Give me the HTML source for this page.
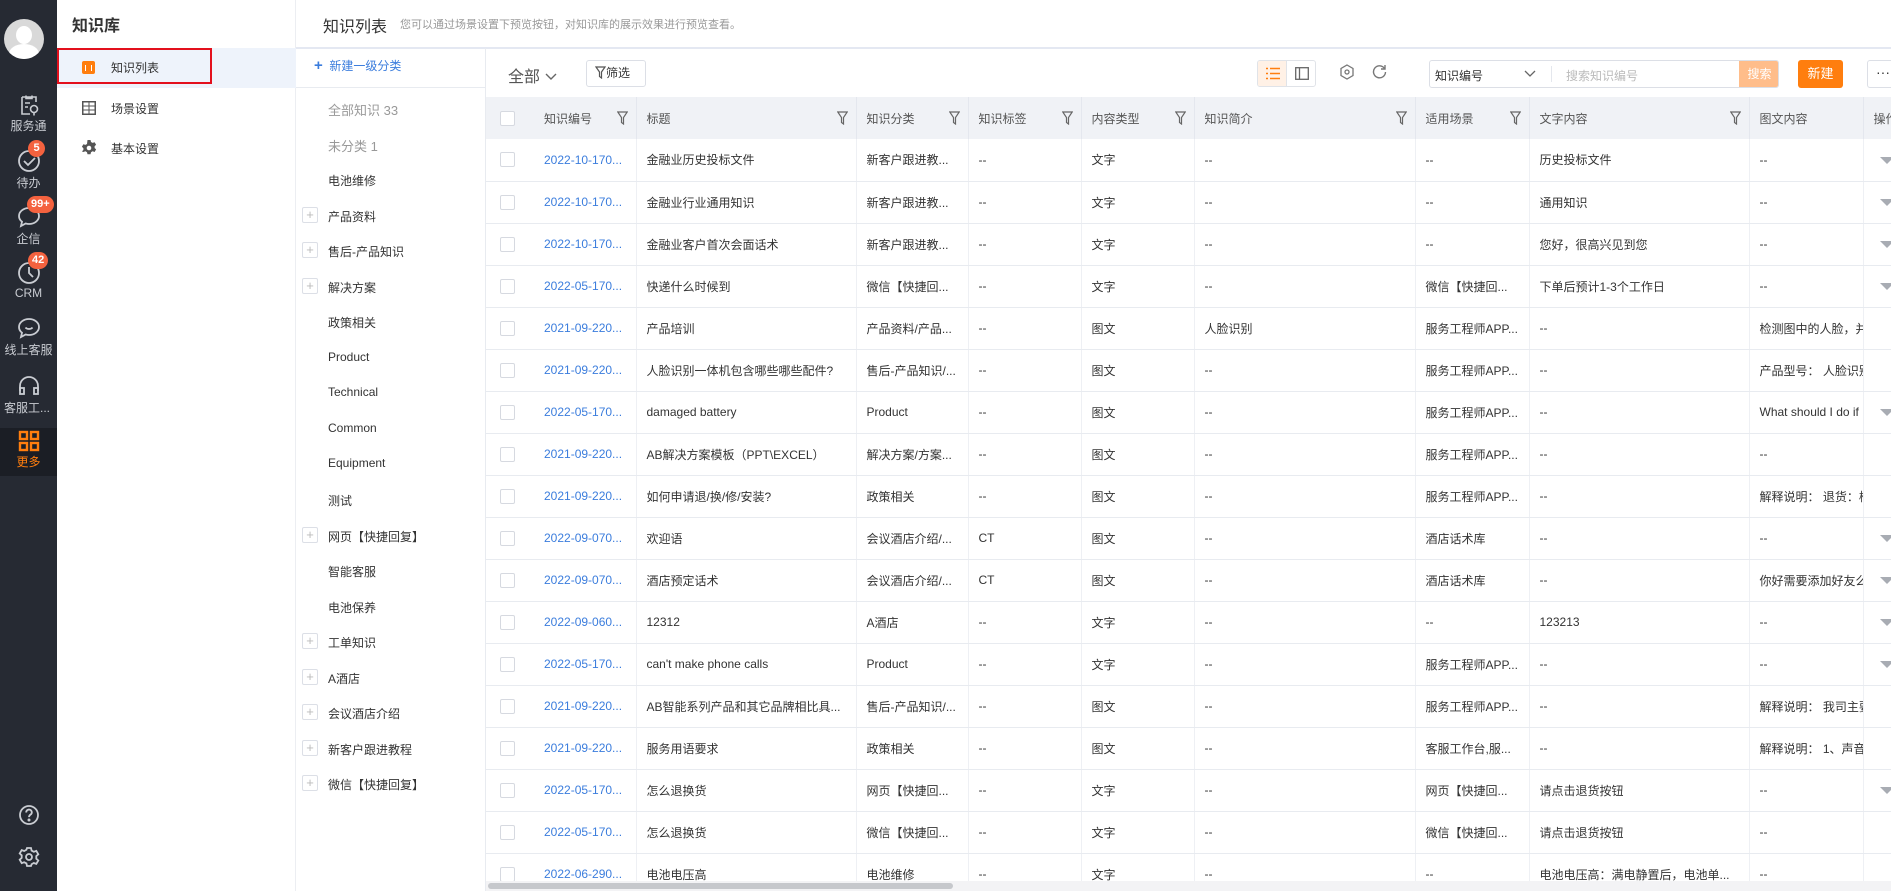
<!DOCTYPE html>
<html><head><meta charset="utf-8">
<style>
*{box-sizing:border-box;margin:0;padding:0}
html,body{width:1891px;height:891px;overflow:hidden;background:#fff;font-family:"Liberation Sans","Noto Sans CJK SC",sans-serif;color:#333;font-size:12px}
.abs{position:absolute}
#side{left:0;top:0;width:57px;height:891px;background:#262a33}
.nav{position:absolute;left:0;width:57px;text-align:center;color:#c9ccd2;font-size:12px}
.nav svg{display:block;margin:0 auto}
.badge{position:absolute;background:#f4623f;color:#fff;font-size:11px;font-weight:bold;border-radius:9px;height:17px;line-height:17px;padding:0 4px;min-width:17px;text-align:center}
#menu{left:57px;top:0;width:239px;height:891px;background:#fff;border-right:1px solid #eceef2}
#cat{left:296px;top:48px;width:190px;height:843px;border-right:1px solid #e8ebf0}
.catitem{position:absolute;left:32px;font-size:12px;color:#333}
.plus{position:absolute;left:-26px;top:-1px;width:16px;height:16px;border:1px solid #dcdfe6;border-radius:2px;color:#bbb;font-size:13px;line-height:13px;text-align:center}
table{border-collapse:collapse;table-layout:fixed}
td,th{height:42px;border-bottom:1px solid #e8ebf0;padding:0 10px;white-space:nowrap;overflow:hidden;text-align:left;font-weight:normal;font-size:12px}
th{background:#f0f2f6;color:#555;border-right:1px solid #e4e7ee;position:relative;border-bottom:none}
td{border-right:1px solid #eef0f4}
td:first-child,th:first-child{border-right:none}
.cb{width:15px;height:15px;border:1px solid #d6d9e0;border-radius:2px;background:#fff;margin-left:4px}
.lk{color:#3b7ddd}
.flt{position:absolute;right:8px;top:14px}
.tri{display:inline-block;width:0;height:0;border-left:7px solid transparent;border-right:7px solid transparent;border-top:7px solid #a8acb3;margin-top:4px}
</style></head><body>

<div id="side" class="abs">
  <div class="abs" style="left:4px;top:19px;width:40px;height:40px;border-radius:50%;background:#d9d9d9;overflow:hidden">
    <div style="position:absolute;left:12px;top:7px;width:16px;height:18px;border-radius:50%;background:#fff"></div>
    <div style="position:absolute;left:5px;top:25px;width:30px;height:20px;border-radius:50% 50% 0 0;background:#fff"></div>
  </div>
  <div class="nav" style="top:94px"><svg width="22" height="22" viewBox="0 0 22 22" fill="none" stroke="#c9ccd2" stroke-width="1.6"><path d="M4 3h14v5M4 3v17h8M8 1.5v3h6v-3M7 9h5M7 13h3"/><circle cx="16" cy="15" r="3.5"/><path d="M16 18.5v3"/></svg><div style="margin-top:1px">服务通</div></div>
  <div class="nav" style="top:149px"><svg width="24" height="24" viewBox="0 0 24 24" fill="none" stroke="#c9ccd2" stroke-width="1.8"><circle cx="12" cy="12" r="10"/><path d="M7 12l4 4 7-7"/></svg><div style="margin-top:1px">待办</div></div>
  <div class="badge" style="left:28px;top:140px">5</div>
  <div class="nav" style="top:205px"><svg width="24" height="24" viewBox="0 0 24 24" fill="none" stroke="#c9ccd2" stroke-width="1.8"><path d="M12 3c5.5 0 10 3.6 10 8s-4.5 8-10 8c-1.2 0-2.3-.2-3.3-.5L4 21l1-4.3C3 15.2 2 13.2 2 11c0-4.4 4.5-8 10-8z"/></svg><div style="margin-top:1px">企信</div></div>
  <div class="badge" style="left:27px;top:196px">99+</div>
  <div class="nav" style="top:261px"><svg width="24" height="24" viewBox="0 0 24 24" fill="none" stroke="#c9ccd2" stroke-width="1.8"><circle cx="12" cy="12" r="10"/><path d="M12 6v6l4 4"/></svg><div style="margin-top:1px">CRM</div></div>
  <div class="badge" style="left:28px;top:252px">42</div>
  <div class="nav" style="top:316px"><svg width="24" height="24" viewBox="0 0 24 24" fill="none" stroke="#c9ccd2" stroke-width="1.8"><path d="M12 3c5.5 0 10 3.6 10 8s-4.5 8-10 8c-1.2 0-2.3-.2-3.3-.5L4 21l1-4.3C3 15.2 2 13.2 2 11c0-4.4 4.5-8 10-8z"/><path d="M8.5 11.5c1.5 2 5.5 2 7 0"/></svg><div style="margin-top:1px">线上客服</div></div>
  <div class="nav" style="top:374px;white-space:nowrap;overflow:hidden"><svg width="24" height="24" viewBox="0 0 24 24" fill="none" stroke="#c9ccd2" stroke-width="1.8"><path d="M3 17v-5a9 9 0 0118 0v5"/><rect x="3" y="14" width="4" height="6"/><rect x="17" y="14" width="4" height="6"/></svg><div style="margin-top:1px;margin-left:-3px">客服工...</div></div>
  <div class="abs" style="left:0;top:428px;width:57px;height:48px;background:#1b1e25"></div>
  <div class="nav" style="top:430px;color:#ff7e0e"><svg width="22" height="22" viewBox="0 0 22 22" fill="none" stroke="#ff7e0e" stroke-width="2.4"><rect x="2" y="2" width="7" height="7"/><rect x="13" y="2" width="7" height="7"/><rect x="2" y="13" width="7" height="7"/><rect x="13" y="13" width="7" height="7"/></svg><div style="margin-top:1px">更多</div></div>
  <div class="nav" style="top:804px"><svg width="22" height="22" viewBox="0 0 22 22" fill="none" stroke="#c9ccd2" stroke-width="1.8"><circle cx="11" cy="11" r="9"/><path d="M8.2 8.5a2.8 2.8 0 115 1.6c-1.2.9-2.200 1.4-2.2 3"/><circle cx="11" cy="16" r=".6" fill="#c9ccd2"/></svg></div>
  <div class="nav" style="top:846px"><svg width="22" height="22" viewBox="0 0 22 22" fill="none" stroke="#c9ccd2" stroke-width="1.8"><path d="M9 2h4l.6 2.6 2.2 1.2 2.5-.9 2 3.4-2 1.8v2.6l2 1.8-2 3.4-2.5-.9-2.2 1.2L13 20H9l-.6-2.6-2.2-1.2-2.5.9-2-3.4 2-1.8V9.3l-2-1.8 2-3.4 2.5.9 2.2-1.2z"/><circle cx="11" cy="11" r="3"/></svg></div>
</div>

<div id="menu" class="abs">
  <div class="abs" style="left:15px;top:12px;font-size:16px;font-weight:bold;color:#333">知识库</div>
  <div class="abs" style="left:0;top:48px;width:239px;height:40px;background:#eef3fb"></div>
  <div class="abs" style="left:0;top:48px;width:155px;height:36px;border:2px solid #e3101d"></div>
  <div class="abs" style="left:25px;top:61px;width:13px;height:13px;background:#ff7e0e;border-radius:2px"><div style="position:absolute;left:3px;top:4px;width:7px;height:6px;border-left:1.5px solid #fff;border-right:1.5px solid #fff"></div></div>
  <div class="abs" style="left:54px;top:59px">知识列表</div>
  <div class="abs" style="left:25px;top:101px"><svg width="14" height="14" viewBox="0 0 14 14" fill="#555"><path d="M0 0h14v14H0z M1.5 1.5v3h5v-3z M7.5 1.5v3h5v-3z M1.5 5.5v3h5v-3z M7.5 5.5v3h5v-3z M1.5 9.5v3h5v-3z M7.5 9.5v3h5v-3z" fill-rule="evenodd"/></svg></div>
  <div class="abs" style="left:54px;top:100px">场景设置</div>
  <div class="abs" style="left:24px;top:140px"><svg width="16" height="16" viewBox="0 0 16 16"><path fill="#555" d="M6.5 0h3l.5 2 1.6.9 2-.7 1.5 2.6-1.5 1.4v1.8l1.5 1.4-1.5 2.6-2-.7-1.6.9-.5 2h-3l-.5-2-1.6-.9-2 .7L.9 11.4l1.5-1.4V8.2L.9 6.8 2.4 4.2l2 .7L6 4z"/><circle cx="8" cy="8" r="2.3" fill="#fff"/></svg></div>
  <div class="abs" style="left:54px;top:140px">基本设置</div>
</div>

<div class="abs" style="left:323px;top:13px;font-size:16px;color:#333">知识列表</div>
<div class="abs" style="left:400px;top:16px;font-size:11px;color:#999">您可以通过场景设置下预览按钮，对知识库的展示效果进行预览查看。</div>
<div class="abs" style="left:296px;top:47px;width:1595px;height:2px;background:#e4e8f2"></div>

<div id="cat" class="abs">
  <div class="abs" style="left:18px;top:9px;color:#3b7ddd;font-size:12px"><span style="font-size:15px;font-weight:bold">+</span>&nbsp; 新建一级分类</div>
  <div class="abs" style="left:0;top:39px;width:190px;height:1px;background:#e8ebf0"></div>
  <div class="catitem" style="top:52px;color:#999;font-size:13px">全部知识 33</div>
  <div class="catitem" style="top:88px;color:#999;font-size:13px">未分类 1</div>
  <div class="catitem" style="top:124px">电池维修</div>
  <div class="catitem" style="top:160px"><span class="plus">+</span>产品资料</div>
  <div class="catitem" style="top:195px"><span class="plus">+</span>售后-产品知识</div>
  <div class="catitem" style="top:231px"><span class="plus">+</span>解决方案</div>
  <div class="catitem" style="top:266px">政策相关</div>
  <div class="catitem" style="top:302px">Product</div>
  <div class="catitem" style="top:337px">Technical</div>
  <div class="catitem" style="top:373px">Common</div>
  <div class="catitem" style="top:408px">Equipment</div>
  <div class="catitem" style="top:444px">测试</div>
  <div class="catitem" style="top:480px"><span class="plus">+</span>网页【快捷回复】</div>
  <div class="catitem" style="top:515px">智能客服</div>
  <div class="catitem" style="top:551px">电池保养</div>
  <div class="catitem" style="top:586px"><span class="plus">+</span>工单知识</div>
  <div class="catitem" style="top:622px"><span class="plus">+</span>A酒店</div>
  <div class="catitem" style="top:657px"><span class="plus">+</span>会议酒店介绍</div>
  <div class="catitem" style="top:693px"><span class="plus">+</span>新客户跟进教程</div>
  <div class="catitem" style="top:728px"><span class="plus">+</span>微信【快捷回复】</div>
</div>

<div class="abs" style="left:508px;top:63px;font-size:16px;color:#555">全部 <svg width="14" height="10" viewBox="0 0 14 10" fill="none" stroke="#666" stroke-width="1.4"><path d="M2 2l5 5 5-5"/></svg></div>
<div class="abs" style="left:586px;top:60px;width:60px;height:27px;border:1px solid #dcdfe6;border-radius:3px;font-size:12px;line-height:25px;padding-left:8px"><svg width="11" height="13" viewBox="0 0 11 13" fill="none" stroke="#555" stroke-width="1.2" style="vertical-align:-2px"><path d="M1 1h9L6.5 6v6L4.5 10.5V6z"/></svg>筛选</div>
<div class="abs" style="left:1257px;top:60px;width:59px;height:27px;border:1px solid #e0e3e8;border-radius:3px;overflow:hidden">
  <div style="position:absolute;left:0;top:0;width:29px;height:25px;background:#fff1e6;border-right:1px solid #e0e3e8"></div>
  <svg class="abs" style="left:8px;top:6px" width="14" height="13" viewBox="0 0 14 13" stroke="#ff7e0e" stroke-width="1.4"><path d="M0 1.5h2M4 1.5h10M0 6.5h2M4 6.5h10M0 11.5h2M4 11.5h10"/></svg>
  <svg class="abs" style="left:37px;top:6px" width="14" height="13" viewBox="0 0 14 13" fill="none" stroke="#666" stroke-width="1.3"><rect x=".7" y=".7" width="12.6" height="11.6"/><path d="M4.5 1v11"/></svg>
</div>
<svg class="abs" style="left:1340px;top:64px" width="14" height="16" viewBox="0 0 14 16" fill="none" stroke="#777" stroke-width="1.3"><path d="M7 1l6 3.5v7L7 15l-6-3.5v-7z"/><circle cx="7" cy="8" r="2"/></svg>
<svg class="abs" style="left:1372px;top:64px" width="15" height="15" viewBox="0 0 15 15" fill="none" stroke="#777" stroke-width="1.4"><path d="M12.5 4.5A6 6 0 1013.5 8"/><path d="M13 1v4h-4"/></svg>
<div class="abs" style="left:1429px;top:60px;width:350px;height:28px;border:1px solid #dcdfe6;border-radius:3px;overflow:hidden">
  <div class="abs" style="left:5px;top:6px;font-size:12px;color:#333">知识编号</div>
  <svg class="abs" style="left:94px;top:9px" width="12" height="8" viewBox="0 0 12 8" fill="none" stroke="#666" stroke-width="1.3"><path d="M1 1l5 5 5-5"/></svg>
  <div class="abs" style="left:121px;top:5px;width:1px;height:16px;background:#e4e7ed"></div>
  <div class="abs" style="left:136px;top:6px;font-size:12px;color:#bbb">搜索知识编号</div>
  <div class="abs" style="left:309px;top:0;width:41px;height:26px;background:#ffbd8a;color:#fff;font-size:12px;line-height:26px;text-align:center">搜索</div>
</div>
<div class="abs" style="left:1798px;top:60px;width:45px;height:28px;background:#ff7e0e;border-radius:3px;color:#fff;font-size:13px;line-height:28px;text-align:center">新建</div>
<div class="abs" style="left:1867px;top:60px;width:40px;height:28px;border:1px solid #dcdfe6;border-radius:3px;font-size:14px;line-height:22px;padding-left:8px">···</div>

<div class="abs" style="left:486px;top:97px;width:1405px;height:786px;overflow:hidden">
<table style="width:1430px">
<colgroup><col style="width:48px"><col style="width:102px"><col style="width:220px"><col style="width:112px"><col style="width:113px"><col style="width:113px"><col style="width:221px"><col style="width:114px"><col style="width:220px"><col style="width:114px"><col style="width:53px"></colgroup>
<tr><th><div class="cb"></div></th><th>知识编号<svg class="flt" width="11" height="14" viewBox="0 0 11 14" fill="none" stroke="#666" stroke-width="1.2"><path d="M.8 1h9.4L6.5 6.5V13L4.5 11.5V6.5z"/></svg></th><th>标题<svg class="flt" width="11" height="14" viewBox="0 0 11 14" fill="none" stroke="#666" stroke-width="1.2"><path d="M.8 1h9.4L6.5 6.5V13L4.5 11.5V6.5z"/></svg></th><th>知识分类<svg class="flt" width="11" height="14" viewBox="0 0 11 14" fill="none" stroke="#666" stroke-width="1.2"><path d="M.8 1h9.4L6.5 6.5V13L4.5 11.5V6.5z"/></svg></th><th>知识标签<svg class="flt" width="11" height="14" viewBox="0 0 11 14" fill="none" stroke="#666" stroke-width="1.2"><path d="M.8 1h9.4L6.5 6.5V13L4.5 11.5V6.5z"/></svg></th><th>内容类型<svg class="flt" width="11" height="14" viewBox="0 0 11 14" fill="none" stroke="#666" stroke-width="1.2"><path d="M.8 1h9.4L6.5 6.5V13L4.5 11.5V6.5z"/></svg></th><th>知识简介<svg class="flt" width="11" height="14" viewBox="0 0 11 14" fill="none" stroke="#666" stroke-width="1.2"><path d="M.8 1h9.4L6.5 6.5V13L4.5 11.5V6.5z"/></svg></th><th>适用场景<svg class="flt" width="11" height="14" viewBox="0 0 11 14" fill="none" stroke="#666" stroke-width="1.2"><path d="M.8 1h9.4L6.5 6.5V13L4.5 11.5V6.5z"/></svg></th><th>文字内容<svg class="flt" width="11" height="14" viewBox="0 0 11 14" fill="none" stroke="#666" stroke-width="1.2"><path d="M.8 1h9.4L6.5 6.5V13L4.5 11.5V6.5z"/></svg></th><th>图文内容</th><th>操作</th></tr>
<tr><td><div class="cb"></div></td><td class="lk">2022-10-170...</td><td>金融业历史投标文件</td><td>新客户跟进教...</td><td>--</td><td>文字</td><td>--</td><td>--</td><td>历史投标文件</td><td>--</td><td><i class="tri"></i></td></tr>
<tr><td><div class="cb"></div></td><td class="lk">2022-10-170...</td><td>金融业行业通用知识</td><td>新客户跟进教...</td><td>--</td><td>文字</td><td>--</td><td>--</td><td>通用知识</td><td>--</td><td><i class="tri"></i></td></tr>
<tr><td><div class="cb"></div></td><td class="lk">2022-10-170...</td><td>金融业客户首次会面话术</td><td>新客户跟进教...</td><td>--</td><td>文字</td><td>--</td><td>--</td><td>您好，很高兴见到您</td><td>--</td><td><i class="tri"></i></td></tr>
<tr><td><div class="cb"></div></td><td class="lk">2022-05-170...</td><td>快递什么时候到</td><td>微信【快捷回...</td><td>--</td><td>文字</td><td>--</td><td>微信【快捷回...</td><td>下单后预计1-3个工作日</td><td>--</td><td><i class="tri"></i></td></tr>
<tr><td><div class="cb"></div></td><td class="lk">2021-09-220...</td><td>产品培训</td><td>产品资料/产品...</td><td>--</td><td>图文</td><td>人脸识别</td><td>服务工程师APP...</td><td>--</td><td>检测图中的人脸，并</td><td></td></tr>
<tr><td><div class="cb"></div></td><td class="lk">2021-09-220...</td><td>人脸识别一体机包含哪些哪些配件?</td><td>售后-产品知识/...</td><td>--</td><td>图文</td><td>--</td><td>服务工程师APP...</td><td>--</td><td>产品型号： 人脸识别</td><td></td></tr>
<tr><td><div class="cb"></div></td><td class="lk">2022-05-170...</td><td>damaged battery</td><td>Product</td><td>--</td><td>图文</td><td>--</td><td>服务工程师APP...</td><td>--</td><td>What should I do if</td><td><i class="tri"></i></td></tr>
<tr><td><div class="cb"></div></td><td class="lk">2021-09-220...</td><td>AB解决方案模板（PPT\EXCEL）</td><td>解决方案/方案...</td><td>--</td><td>图文</td><td>--</td><td>服务工程师APP...</td><td>--</td><td>--</td><td></td></tr>
<tr><td><div class="cb"></div></td><td class="lk">2021-09-220...</td><td>如何申请退/换/修/安装?</td><td>政策相关</td><td>--</td><td>图文</td><td>--</td><td>服务工程师APP...</td><td>--</td><td>解释说明： 退货：楼</td><td></td></tr>
<tr><td><div class="cb"></div></td><td class="lk">2022-09-070...</td><td>欢迎语</td><td>会议酒店介绍/...</td><td>CT</td><td>图文</td><td>--</td><td>酒店话术库</td><td>--</td><td>--</td><td><i class="tri"></i></td></tr>
<tr><td><div class="cb"></div></td><td class="lk">2022-09-070...</td><td>酒店预定话术</td><td>会议酒店介绍/...</td><td>CT</td><td>图文</td><td>--</td><td>酒店话术库</td><td>--</td><td>你好需要添加好友么</td><td><i class="tri"></i></td></tr>
<tr><td><div class="cb"></div></td><td class="lk">2022-09-060...</td><td>12312</td><td>A酒店</td><td>--</td><td>文字</td><td>--</td><td>--</td><td>123213</td><td>--</td><td><i class="tri"></i></td></tr>
<tr><td><div class="cb"></div></td><td class="lk">2022-05-170...</td><td>can't make phone calls</td><td>Product</td><td>--</td><td>文字</td><td>--</td><td>服务工程师APP...</td><td>--</td><td>--</td><td><i class="tri"></i></td></tr>
<tr><td><div class="cb"></div></td><td class="lk">2021-09-220...</td><td>AB智能系列产品和其它品牌相比具...</td><td>售后-产品知识/...</td><td>--</td><td>图文</td><td>--</td><td>服务工程师APP...</td><td>--</td><td>解释说明： 我司主要</td><td></td></tr>
<tr><td><div class="cb"></div></td><td class="lk">2021-09-220...</td><td>服务用语要求</td><td>政策相关</td><td>--</td><td>图文</td><td>--</td><td>客服工作台,服...</td><td>--</td><td>解释说明： 1、声音</td><td></td></tr>
<tr><td><div class="cb"></div></td><td class="lk">2022-05-170...</td><td>怎么退换货</td><td>网页【快捷回...</td><td>--</td><td>文字</td><td>--</td><td>网页【快捷回...</td><td>请点击退货按钮</td><td>--</td><td><i class="tri"></i></td></tr>
<tr><td><div class="cb"></div></td><td class="lk">2022-05-170...</td><td>怎么退换货</td><td>微信【快捷回...</td><td>--</td><td>文字</td><td>--</td><td>微信【快捷回...</td><td>请点击退货按钮</td><td>--</td><td></td></tr>
<tr><td><div class="cb"></div></td><td class="lk">2022-06-290...</td><td>电池电压高</td><td>电池维修</td><td>--</td><td>文字</td><td>--</td><td>--</td><td>电池电压高：满电静置后，电池单...</td><td>--</td><td></td></tr>
</table>
</div>
<style>td:last-child{padding-left:16px;border-left:1px solid #e4e7ee}th:last-child{border-left:1px solid #e4e7ee}</style>
<div class="abs" style="left:486px;top:881px;width:1405px;height:10px;background:#f3f3f5"></div>
<div class="abs" style="left:488px;top:883px;width:465px;height:6px;background:#c6c8cc;border-radius:3px"></div>
</body></html>
